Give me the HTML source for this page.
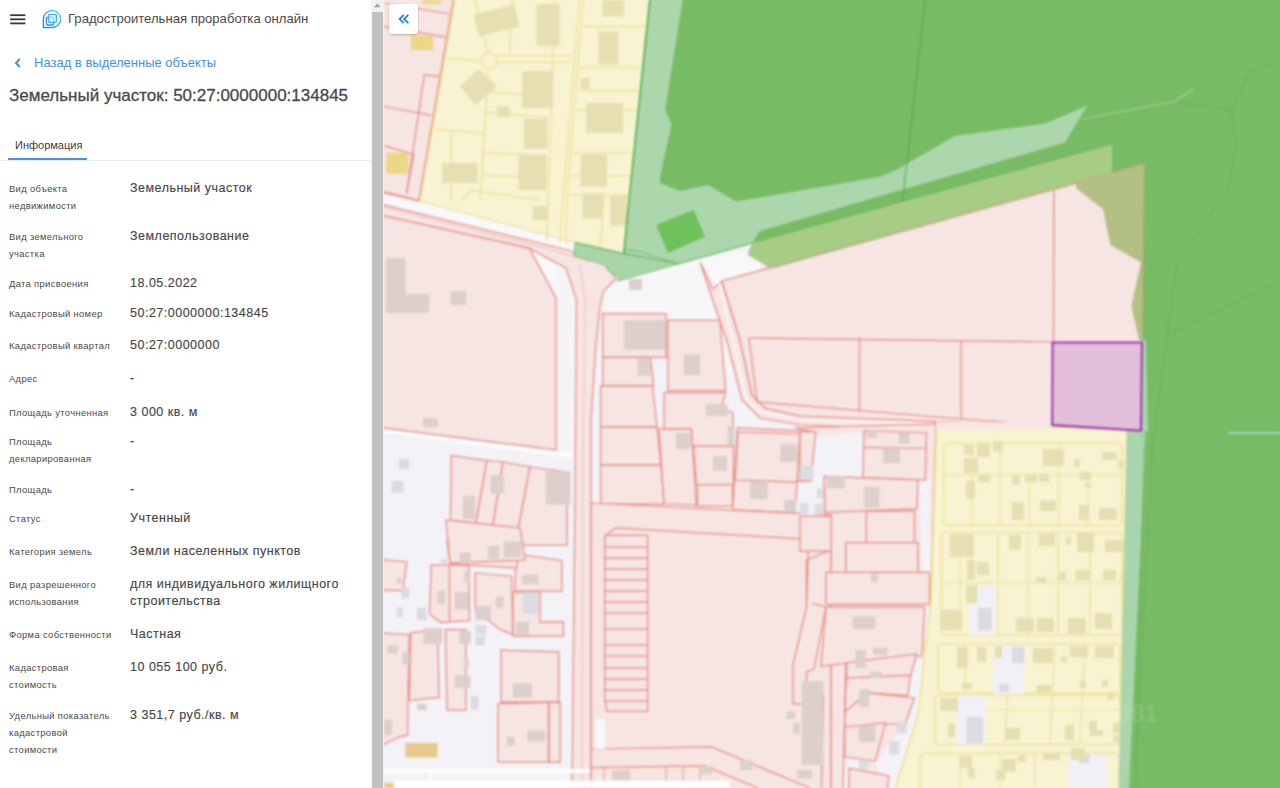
<!DOCTYPE html>
<html><head><meta charset="utf-8">
<style>
*{margin:0;padding:0;box-sizing:border-box}
html,body{width:1280px;height:788px;overflow:hidden;background:#fff;font-family:"Liberation Sans",sans-serif}
#panel{position:absolute;left:0;top:0;width:371px;height:788px;background:#fff}
.a{position:absolute;white-space:nowrap}
.lb{position:absolute;left:9px;font-size:9.4px;letter-spacing:0.35px;line-height:17.2px;color:#4a4a4a}
.vl{position:absolute;left:130px;font-size:12.5px;letter-spacing:0.5px;line-height:17px;color:#474747;-webkit-text-stroke:0.15px #474747}
#sb{position:absolute;left:371px;top:0;width:13px;height:788px;background:#f1f1f1}
#thumb{position:absolute;left:372px;top:12px;width:11px;height:776px;background:#c1c1c1}
#map{position:absolute;left:384px;top:0;width:896px;height:788px;background:#f4f3f7;overflow:hidden}
</style></head><body>
<div id="panel">
  <svg class="a" style="left:10px;top:14px" width="16" height="11" viewBox="0 0 16 11"><rect x="0.2" y="0.3" width="15.2" height="1.8" fill="#383838"/><rect x="0.2" y="4.4" width="15.2" height="1.8" fill="#383838"/><rect x="0.2" y="8.5" width="15.2" height="1.8" fill="#383838"/></svg>
  <svg class="a" style="left:42px;top:9px" width="20" height="20" viewBox="0 0 20 20">
    <defs><linearGradient id="lg" x1="0" y1="1" x2="1" y2="0"><stop offset="0" stop-color="#3d7fdc"/><stop offset="0.6" stop-color="#45b8ec"/><stop offset="1" stop-color="#5fe3d2"/></linearGradient></defs>
    <path d="M1.4 18.6 L1.4 10 A8.6 8.6 0 1 1 10 18.6 Z" fill="none" stroke="url(#lg)" stroke-width="1.5" stroke-linejoin="round"/>
    <rect x="4.4" y="8.2" width="7.4" height="7.8" rx="1.2" fill="#d9f4ff" stroke="#3f8fe0" stroke-width="1.3"/>
    <rect x="6.6" y="5.4" width="7.8" height="8" rx="1.2" fill="#c8f0ff" fill-opacity="0.7" stroke="#44b0ea" stroke-width="1.3"/>
  </svg>
  <div class="a" style="left:68px;top:10px;font-size:13.1px;line-height:18px;color:#4a4a4a">Градостроительная проработка онлайн</div>
  <svg class="a" style="left:14px;top:58px" width="8" height="10" viewBox="0 0 8 10"><path d="M5.8 1 L2 5 L5.8 9" fill="none" stroke="#4a90e0" stroke-width="2"/></svg>
  <div class="a" style="left:34px;top:55px;font-size:13px;line-height:16px;color:#4a8fdc">Назад в выделенные объекты</div>
  <div class="a" style="left:9px;top:85px;font-size:17px;line-height:22px;color:#4a4a4a;-webkit-text-stroke:0.3px #4a4a4a">Земельный участок: 50:27:0000000:134845</div>
  <div class="a" style="left:15px;top:137px;font-size:11px;line-height:16px;color:#3c3c3c">Информация</div>
  <div class="a" style="left:8px;top:158px;width:79px;height:2px;background:#4a90e2"></div>
  <div class="a" style="left:0;top:160px;width:371px;height:1px;background:#ececec"></div>

  <div class="lb" style="top:180px">Вид объекта<br>недвижимости</div>
  <div class="vl" style="top:180px">Земельный участок</div>
  <div class="lb" style="top:228px">Вид земельного<br>участка</div>
  <div class="vl" style="top:228px">Землепользование</div>
  <div class="lb" style="top:275px">Дата присвоения</div>
  <div class="vl" style="top:275px">18.05.2022</div>
  <div class="lb" style="top:305px">Кадастровый номер</div>
  <div class="vl" style="top:305px">50:27:0000000:134845</div>
  <div class="lb" style="top:337px">Кадастровый квартал</div>
  <div class="vl" style="top:337px">50:27:0000000</div>
  <div class="lb" style="top:370px">Адрес</div>
  <div class="vl" style="top:370px">-</div>
  <div class="lb" style="top:404px">Площадь уточненная</div>
  <div class="vl" style="top:404px">3 000 кв. м</div>
  <div class="lb" style="top:433px">Площадь<br>декларированная</div>
  <div class="vl" style="top:433px">-</div>
  <div class="lb" style="top:481px">Площадь</div>
  <div class="vl" style="top:481px">-</div>
  <div class="lb" style="top:510px">Статус</div>
  <div class="vl" style="top:510px">Учтенный</div>
  <div class="lb" style="top:543px">Категория земель</div>
  <div class="vl" style="top:543px">Земли населенных пунктов</div>
  <div class="lb" style="top:576px">Вид разрешенного<br>использования</div>
  <div class="vl" style="top:576px">для индивидуального жилищного<br>строительства</div>
  <div class="lb" style="top:626px">Форма собственности</div>
  <div class="vl" style="top:626px">Частная</div>
  <div class="lb" style="top:659px">Кадастровая<br>стоимость</div>
  <div class="vl" style="top:659px">10 055 100 руб.</div>
  <div class="lb" style="top:707px">Удельный показатель<br>кадастровой<br>стоимости</div>
  <div class="vl" style="top:707px">3 351,7 руб./кв. м</div>
</div>
<div id="sb"></div>
<div id="thumb"></div>
<svg class="a" style="left:371px;top:0" width="13" height="10" viewBox="0 0 13 10"><path d="M3 7.2 L9.5 7.2 L6.25 3.6 Z" fill="#a3a3a3"/></svg>
<div id="map">
<svg width="904" height="796" viewBox="380 -4 904 796" style="position:absolute;left:-4px;top:-4px;filter:blur(0.8px)"><defs><filter id="sh" x="-30%" y="-30%" width="160%" height="160%"><feDropShadow dx="0" dy="1" stdDeviation="1.2" flood-color="#000" flood-opacity="0.25"/></filter></defs>
<rect x="376.0" y="-8.0" width="912.0" height="804.0" fill="#f3f2f7" stroke="none" stroke-width="1" />
<polygon points="376.0,186.0 574.0,240.0 600.0,250.0 640.0,255.0 700.0,258.0 760.0,250.0 760.0,300.0 700.0,300.0 574.0,300.0 376.0,220.0" fill="#f8f8fa" stroke="none" stroke-width="1" />
<rect x="555.0" y="250.0" width="20.0" height="210.0" fill="#f5f5f7" stroke="none" stroke-width="1" />
<polygon points="605.0,285.0 710.0,265.0 722.0,281.0 745.0,390.0 760.0,410.0 840.0,420.0 830.0,425.0 604.0,315.0" fill="#f6f6f8" stroke="none" stroke-width="1" />
<polygon points="376.0,-8.0 454.0,-8.0 419.0,201.0 376.0,191.0" fill="#f6e5e3" stroke="#e8887e" stroke-width="1.25" />
<polyline points="385.0,3.5 451.0,14.0" fill="none" stroke="#e8887e" stroke-width="1.25" />
<polyline points="384.0,26.6 447.5,37.3" fill="none" stroke="#e8887e" stroke-width="1.25" />
<polyline points="424.4,74.6 438.6,76.3" fill="none" stroke="#e8887e" stroke-width="1.25" />
<polyline points="424.4,74.6 406.6,193.5" fill="none" stroke="#e8887e" stroke-width="1.25" />
<polyline points="384.0,106.5 431.5,115.4" fill="none" stroke="#e8887e" stroke-width="1.25" />
<polyline points="384.0,145.6 413.7,154.5 406.6,193.5" fill="none" stroke="#e8887e" stroke-width="1.25" />
<polyline points="384.0,191.8 419.0,200.6" fill="none" stroke="#e8887e" stroke-width="1.25" />
<rect x="411.0" y="35.5" width="22.0" height="14.5" fill="#ebd786" stroke="none" stroke-width="1" />
<rect x="386.4" y="152.7" width="22.0" height="21.3" fill="#ebd786" stroke="none" stroke-width="1" />
<rect x="422.0" y="0.0" width="19.0" height="4.0" fill="#ebd786" stroke="none" stroke-width="1" />
<polygon points="376.0,203.0 568.0,250.0 606.0,264.0 616.0,278.6 603.5,291.0 600.0,306.0 595.5,351.0 591.0,420.0 591.0,796.0 572.0,796.0 575.0,500.0 576.5,300.0 566.0,268.0 529.5,248.4 376.0,214.0" fill="#f6e5e3" stroke="#e8887e" stroke-width="1.25" />
<polyline points="384.0,207.0 560.0,252.0 590.0,262.0" fill="none" stroke="#e8887e" stroke-width="0.8" opacity="0.6"/>
<polyline points="580.0,265.0 585.0,300.0 583.0,450.0 582.0,788.0" fill="none" stroke="#e8887e" stroke-width="0.8" opacity="0.5"/>
<polygon points="376.0,214.0 529.5,248.4 556.0,297.6 556.0,450.0 376.0,427.0" fill="#f6e5e3" stroke="#e8887e" stroke-width="1.25" />
<rect x="386.0" y="258.0" width="19.5" height="55.0" fill="#dccfcc" stroke="none" stroke-width="1" />
<rect x="386.0" y="294.0" width="43.0" height="19.0" fill="#dccfcc" stroke="none" stroke-width="1" />
<rect x="450.4" y="291.3" width="15.6" height="13.7" fill="#dccfcc" stroke="none" stroke-width="1" />
<rect x="423.0" y="418.0" width="13.0" height="9.0" fill="#dccfcc" stroke="none" stroke-width="1" />
<polyline points="384.0,431.0 572.0,456.0" fill="none" stroke="#ffffff" stroke-width="3" />
<polygon points="376.0,559.0 406.7,562.0 403.0,590.4 376.0,590.4" fill="#f6e5e3" stroke="#e8887e" stroke-width="1.25" />
<polygon points="431.2,565.2 469.0,565.2 469.6,620.3 440.7,622.5 429.6,614.0" fill="#f6e5e3" stroke="#e8887e" stroke-width="1.25" />
<polygon points="475.3,573.0 511.5,576.2 513.0,634.5 500.5,629.7 475.3,610.8" fill="#f6e5e3" stroke="#e8887e" stroke-width="1.25" />
<polygon points="516.2,554.2 561.9,560.5 561.9,591.0 514.7,591.0" fill="#f6e5e3" stroke="#e8887e" stroke-width="1.25" />
<polygon points="513.0,592.0 540.0,592.0 540.0,622.0 563.5,621.9 563.5,636.0 513.0,636.0" fill="#f6e5e3" stroke="#e8887e" stroke-width="1.25" />
<polygon points="447.0,540.0 522.5,540.0 516.2,568.0 450.0,563.6" fill="#f6e5e3" stroke="#e8887e" stroke-width="1.25" />
<polygon points="376.0,632.9 409.2,634.5 407.6,735.2 399.7,736.8 376.0,747.8" fill="#f6e5e3" stroke="#e8887e" stroke-width="1.25" />
<polygon points="410.8,632.9 437.5,629.7 439.1,697.4 409.2,700.6" fill="#f6e5e3" stroke="#e8887e" stroke-width="1.25" />
<polygon points="445.4,629.7 465.9,629.7 465.9,710.0 447.0,710.0" fill="#f6e5e3" stroke="#e8887e" stroke-width="1.25" />
<polygon points="501.0,650.2 558.7,651.8 558.7,702.2 501.0,702.2" fill="#f6e5e3" stroke="#e8887e" stroke-width="1.25" />
<polygon points="498.0,703.7 560.3,702.2 560.3,762.0 498.0,762.0" fill="#f6e5e3" stroke="#e8887e" stroke-width="1.25" />
<polygon points="548.5,702.5 548.5,762.0 549.0,762.0 549.0,702.5" fill="#f6e5e3" stroke="#e8887e" stroke-width="1.25" />
<polygon points="451.4,455.7 487.0,460.5 475.8,523.0 450.4,520.0" fill="#f6e5e3" stroke="#e8887e" stroke-width="1.25" />
<polygon points="487.0,460.5 503.0,462.0 493.0,525.0 475.8,523.0" fill="#f6e5e3" stroke="#e8887e" stroke-width="1.25" />
<polygon points="503.0,462.0 530.0,467.0 518.0,530.0 493.0,525.0" fill="#f6e5e3" stroke="#e8887e" stroke-width="1.25" />
<polygon points="530.0,467.0 567.0,472.0 567.0,545.0 520.0,545.0 518.0,530.0" fill="#f6e5e3" stroke="#e8887e" stroke-width="1.25" />
<polygon points="446.0,520.0 520.0,528.0 525.0,560.0 450.0,563.0" fill="#f6e5e3" stroke="#e8887e" stroke-width="1.25" />
<polyline points="449.5,565.0 449.5,621.0" fill="none" stroke="#e8887e" stroke-width="1.25" />
<rect x="488.0" y="546.0" width="11.0" height="13.0" fill="#dccfcc" stroke="none" stroke-width="1" />
<rect x="503.6" y="541.6" width="17.4" height="15.7" fill="#dccfcc" stroke="none" stroke-width="1" />
<rect x="459.6" y="552.6" width="11.0" height="11.0" fill="#dccfcc" stroke="none" stroke-width="1" />
<rect x="437.5" y="590.4" width="7.9" height="14.1" fill="#dccfcc" stroke="none" stroke-width="1" />
<rect x="454.8" y="592.0" width="14.2" height="17.3" fill="#dccfcc" stroke="none" stroke-width="1" />
<rect x="464.3" y="571.5" width="6.3" height="11.0" fill="#dccfcc" stroke="none" stroke-width="1" />
<rect x="495.8" y="596.7" width="7.8" height="11.0" fill="#dccfcc" stroke="none" stroke-width="1" />
<rect x="396.6" y="577.8" width="4.7" height="6.2" fill="#dccfcc" stroke="none" stroke-width="1" />
<rect x="475.3" y="606.0" width="15.7" height="14.3" fill="#dccfcc" stroke="none" stroke-width="1" />
<rect x="522.5" y="574.6" width="15.8" height="9.4" fill="#dccfcc" stroke="none" stroke-width="1" />
<rect x="516.0" y="621.9" width="12.8" height="12.6" fill="#dccfcc" stroke="none" stroke-width="1" />
<rect x="423.4" y="628.0" width="18.8" height="16.0" fill="#dccfcc" stroke="none" stroke-width="1" />
<rect x="387.0" y="645.5" width="11.2" height="7.9" fill="#dccfcc" stroke="none" stroke-width="1" />
<rect x="402.9" y="651.8" width="6.3" height="12.6" fill="#dccfcc" stroke="none" stroke-width="1" />
<rect x="459.6" y="631.3" width="11.0" height="12.7" fill="#dccfcc" stroke="none" stroke-width="1" />
<rect x="454.8" y="675.4" width="15.8" height="12.6" fill="#dccfcc" stroke="none" stroke-width="1" />
<rect x="464.3" y="659.6" width="4.7" height="7.9" fill="#dccfcc" stroke="none" stroke-width="1" />
<rect x="417.0" y="703.7" width="9.5" height="6.3" fill="#dccfcc" stroke="none" stroke-width="1" />
<rect x="513.0" y="683.3" width="19.0" height="14.1" fill="#dccfcc" stroke="none" stroke-width="1" />
<rect x="527.3" y="730.5" width="17.3" height="11.0" fill="#dccfcc" stroke="none" stroke-width="1" />
<rect x="506.8" y="736.8" width="7.9" height="9.4" fill="#dccfcc" stroke="none" stroke-width="1" />
<rect x="384.0" y="719.5" width="7.9" height="15.7" fill="#dccfcc" stroke="none" stroke-width="1" />
<rect x="423.0" y="418.6" width="14.7" height="8.7" fill="#dccfcc" stroke="none" stroke-width="1" />
<rect x="463.0" y="495.7" width="11.8" height="23.3" fill="#dccfcc" stroke="none" stroke-width="1" />
<rect x="490.4" y="475.2" width="13.6" height="18.6" fill="#dccfcc" stroke="none" stroke-width="1" />
<rect x="546.0" y="471.3" width="24.5" height="33.2" fill="#dccfcc" stroke="none" stroke-width="1" />
<rect x="440.7" y="559.0" width="6.3" height="6.0" fill="#dcdbe2" stroke="none" stroke-width="1" />
<rect x="401.3" y="587.2" width="7.9" height="11.0" fill="#dcdbe2" stroke="none" stroke-width="1" />
<rect x="396.6" y="607.7" width="6.3" height="9.3" fill="#dcdbe2" stroke="none" stroke-width="1" />
<rect x="417.0" y="607.7" width="9.5" height="12.6" fill="#dcdbe2" stroke="none" stroke-width="1" />
<rect x="475.3" y="625.0" width="11.0" height="9.5" fill="#dcdbe2" stroke="none" stroke-width="1" />
<rect x="475.3" y="636.0" width="9.5" height="9.5" fill="#dcdbe2" stroke="none" stroke-width="1" />
<rect x="522.5" y="592.0" width="15.8" height="22.0" fill="#dcdbe2" stroke="none" stroke-width="1" />
<rect x="470.6" y="695.9" width="7.9" height="14.1" fill="#dcdbe2" stroke="none" stroke-width="1" />
<rect x="398.6" y="458.6" width="10.8" height="10.7" fill="#dcdbe2" stroke="none" stroke-width="1" />
<rect x="391.8" y="481.0" width="11.7" height="11.8" fill="#dcdbe2" stroke="none" stroke-width="1" />
<rect x="405.4" y="743.0" width="32.1" height="14.3" fill="#e9c88c" stroke="none" stroke-width="1" />
<polyline points="384.0,771.0 590.0,771.0" fill="none" stroke="#ffffff" stroke-width="4" />
<polyline points="430.0,771.0 430.0,780.0" fill="none" stroke="#ffffff" stroke-width="2" />
<polygon points="713.0,289.0 722.0,281.0 740.0,340.0 752.0,395.0 765.0,408.0 800.0,416.0 935.0,420.0 935.0,430.0 800.0,425.0 760.0,418.0 742.0,400.0 728.0,345.0 700.0,262.0" fill="#f6e5e3" stroke="#e8887e" stroke-width="1.25" />
<polyline points="705.0,262.0 720.0,285.0 734.0,345.0 746.0,398.0 760.0,412.0 800.0,420.0 935.0,424.0" fill="none" stroke="#ffffff" stroke-width="1.5" opacity="0.8"/>
<polygon points="602.7,313.5 666.2,313.5 666.0,357.4 602.7,357.4" fill="#f6e5e3" stroke="#e8887e" stroke-width="1.25" />
<polygon points="668.0,320.3 720.0,320.3 725.7,390.6 668.0,390.6" fill="#f6e5e3" stroke="#e8887e" stroke-width="1.25" />
<polygon points="602.7,357.4 650.5,357.4 653.5,385.7 602.7,385.7" fill="#f6e5e3" stroke="#e8887e" stroke-width="1.25" />
<polygon points="600.7,385.9 652.5,385.9 657.0,427.0 600.7,427.0" fill="#f6e5e3" stroke="#e8887e" stroke-width="1.25" />
<polygon points="600.7,427.0 657.0,427.0 661.0,465.0 600.7,465.0" fill="#f6e5e3" stroke="#e8887e" stroke-width="1.25" />
<polygon points="600.7,465.0 661.0,465.0 664.0,504.0 600.7,504.0" fill="#f6e5e3" stroke="#e8887e" stroke-width="1.25" />
<polygon points="659.0,428.8 691.6,428.8 696.4,505.0 664.0,504.0" fill="#f6e5e3" stroke="#e8887e" stroke-width="1.25" />
<polygon points="664.2,392.7 725.7,392.7 720.9,410.3 732.6,412.2 733.5,446.4 692.5,446.4 691.6,428.8 664.0,428.8" fill="#f6e5e3" stroke="#e8887e" stroke-width="1.25" />
<polygon points="693.5,446.0 733.5,446.0 733.5,484.5 696.4,484.5" fill="#f6e5e3" stroke="#e8887e" stroke-width="1.25" />
<polygon points="697.4,484.5 732.6,484.5 732.6,506.0 697.4,506.0" fill="#f6e5e3" stroke="#e8887e" stroke-width="1.25" />
<polygon points="737.5,427.8 815.6,431.8 810.7,481.6 797.0,481.0 795.0,512.8 732.6,509.9" fill="#f6e5e3" stroke="#e8887e" stroke-width="1.25" />
<polygon points="738.0,432.0 800.0,434.0 797.0,482.0 735.0,480.0" fill="#f6e5e3" stroke="#e8887e" stroke-width="1.25" />
<rect x="624.0" y="320.0" width="41.0" height="29.6" fill="#dccfcc" stroke="none" stroke-width="1" />
<rect x="683.8" y="354.5" width="16.2" height="20.5" fill="#dccfcc" stroke="none" stroke-width="1" />
<rect x="637.8" y="358.4" width="12.7" height="17.6" fill="#dccfcc" stroke="none" stroke-width="1" />
<rect x="706.0" y="404.4" width="21.7" height="11.6" fill="#dccfcc" stroke="none" stroke-width="1" />
<rect x="676.0" y="432.7" width="14.6" height="16.6" fill="#dccfcc" stroke="none" stroke-width="1" />
<rect x="713.0" y="456.2" width="13.7" height="14.6" fill="#dccfcc" stroke="none" stroke-width="1" />
<rect x="780.4" y="444.5" width="16.6" height="17.5" fill="#dccfcc" stroke="none" stroke-width="1" />
<rect x="750.0" y="481.6" width="17.7" height="17.4" fill="#dccfcc" stroke="none" stroke-width="1" />
<rect x="784.3" y="500.0" width="11.7" height="12.8" fill="#dccfcc" stroke="none" stroke-width="1" />
<rect x="727.7" y="425.9" width="6.8" height="19.5" fill="#dccfcc" stroke="none" stroke-width="1" />
<rect x="629.0" y="279.0" width="12.8" height="11.0" fill="#dccfcc" stroke="none" stroke-width="1" />
<polygon points="591.0,503.0 831.0,515.0 831.0,796.0 591.0,796.0" fill="#f6e5e3" stroke="#e8887e" stroke-width="1.25" />
<polyline points="606.0,535.4 615.4,527.8 804.6,539.2 808.4,548.6 806.5,607.3 793.2,664.0 793.2,703.8 823.4,703.8 823.4,695.4 806.5,695.4 806.5,672.0 814.0,669.0 826.0,607.0 812.0,603.5" fill="none" stroke="#e8887e" stroke-width="1.25" />
<polyline points="591.0,749.0 711.6,747.0 810.0,788.0" fill="none" stroke="#e8887e" stroke-width="1.25" />
<polyline points="591.0,767.7 705.0,765.8 757.7,788.0" fill="none" stroke="#e8887e" stroke-width="1.25" />
<polyline points="831.0,550.0 806.5,560.0 806.5,607.3" fill="none" stroke="#e8887e" stroke-width="1.25" />
<polygon points="604.8,535.4 647.6,535.4 647.6,711.3 607.0,711.3 604.8,700.0" fill="#f6e5e3" stroke="#e8887e" stroke-width="1.25" />
<polyline points="605.0,547.0 648.0,547.0" fill="none" stroke="#e8887e" stroke-width="1.25" />
<polyline points="605.0,558.0 648.0,558.0" fill="none" stroke="#e8887e" stroke-width="1.25" />
<polyline points="605.0,569.0 648.0,569.0" fill="none" stroke="#e8887e" stroke-width="1.25" />
<polyline points="605.0,580.0 648.0,580.0" fill="none" stroke="#e8887e" stroke-width="1.25" />
<polyline points="605.0,591.0 648.0,591.0" fill="none" stroke="#e8887e" stroke-width="1.25" />
<polyline points="605.0,602.0 648.0,602.0" fill="none" stroke="#e8887e" stroke-width="1.25" />
<polyline points="605.0,613.0 648.0,613.0" fill="none" stroke="#e8887e" stroke-width="1.25" />
<polyline points="605.0,629.0 648.0,629.0" fill="none" stroke="#e8887e" stroke-width="1.25" />
<polyline points="605.0,645.0 648.0,645.0" fill="none" stroke="#e8887e" stroke-width="1.25" />
<polyline points="605.0,656.0 648.0,656.0" fill="none" stroke="#e8887e" stroke-width="1.25" />
<polyline points="605.0,668.0 648.0,668.0" fill="none" stroke="#e8887e" stroke-width="1.25" />
<polyline points="605.0,679.0 648.0,679.0" fill="none" stroke="#e8887e" stroke-width="1.25" />
<polyline points="605.0,690.0 648.0,690.0" fill="none" stroke="#e8887e" stroke-width="1.25" />
<polyline points="605.0,701.0 648.0,701.0" fill="none" stroke="#e8887e" stroke-width="1.25" />
<rect x="595.0" y="719.0" width="10.0" height="30.0" fill="#f8f8fa" stroke="none" stroke-width="1" />
<polyline points="604.0,767.0 604.0,788.0" fill="none" stroke="#e8887e" stroke-width="0.8" />
<polyline points="666.0,767.0 666.0,788.0" fill="none" stroke="#e8887e" stroke-width="0.8" />
<polyline points="683.0,767.0 683.0,788.0" fill="none" stroke="#e8887e" stroke-width="0.8" />
<polyline points="700.0,767.0 700.0,788.0" fill="none" stroke="#e8887e" stroke-width="0.8" />
<rect x="612.0" y="770.0" width="18.0" height="12.0" fill="#dccfcc" stroke="none" stroke-width="1" />
<rect x="700.0" y="766.0" width="12.0" height="8.0" fill="#dccfcc" stroke="none" stroke-width="1" />
<rect x="740.0" y="760.0" width="12.0" height="10.0" fill="#dccfcc" stroke="none" stroke-width="1" />
<polygon points="795.0,428.0 936.0,424.0 931.0,600.0 918.0,715.0 893.0,796.0 831.0,796.0 831.0,515.0 810.0,512.0 815.0,432.0" fill="#f6e5e3" stroke="#e8887e" stroke-width="1.25" />
<polygon points="815.0,436.0 864.0,432.0 862.0,476.0 824.0,476.0 818.0,520.0 800.0,520.0 806.0,481.0" fill="#f3f2f7" stroke="none" stroke-width="1" />
<polygon points="918.0,480.0 930.0,480.0 930.0,665.0 911.0,675.0 916.0,654.0 926.0,651.0" fill="#f3f2f7" stroke="none" stroke-width="1" />
<polygon points="910.0,675.0 931.0,655.0 918.0,715.0 893.0,796.0 887.0,796.0 875.0,762.0 905.0,723.0" fill="#f3f2f7" stroke="none" stroke-width="1" />
<polygon points="843.0,757.0 860.0,757.0 860.0,796.0 843.0,796.0" fill="#f3f2f7" stroke="none" stroke-width="1" />
<polygon points="863.9,430.5 926.5,433.0 925.3,480.0 863.0,477.5" fill="#f6e5e3" stroke="#e8887e" stroke-width="1.25" />
<polygon points="824.0,476.3 918.0,480.0 916.9,508.8 825.3,512.4" fill="#f6e5e3" stroke="#e8887e" stroke-width="1.25" />
<polygon points="866.3,511.2 914.5,511.2 914.5,542.5 866.3,542.5" fill="#f6e5e3" stroke="#e8887e" stroke-width="1.25" />
<polygon points="845.8,542.5 918.0,542.5 918.0,572.7 845.8,572.7" fill="#f6e5e3" stroke="#e8887e" stroke-width="1.25" />
<polygon points="826.0,572.4 929.6,572.4 929.6,604.4 826.0,604.4" fill="#f6e5e3" stroke="#e8887e" stroke-width="1.25" />
<polygon points="800.0,516.0 831.3,516.0 831.3,551.0 800.0,551.0" fill="#f6e5e3" stroke="#e8887e" stroke-width="1.25" />
<polygon points="800.0,431.7 815.7,431.7 810.8,481.0 800.0,481.0" fill="#f6e5e3" stroke="#e8887e" stroke-width="1.25" />
<polygon points="826.0,607.0 924.7,607.0 922.0,656.0 821.0,666.0" fill="#f6e5e3" stroke="#e8887e" stroke-width="1.25" />
<polygon points="846.5,662.9 916.8,654.0 910.6,675.4 846.5,678.0" fill="#f6e5e3" stroke="#e8887e" stroke-width="1.25" />
<polygon points="846.5,678.0 910.6,675.4 908.0,695.5 867.8,693.0 867.8,711.9 844.7,711.9" fill="#f6e5e3" stroke="#e8887e" stroke-width="1.25" />
<polygon points="867.8,693.0 914.3,698.0 905.5,723.0 844.7,727.0 844.7,711.9" fill="#f6e5e3" stroke="#e8887e" stroke-width="1.25" />
<polygon points="844.7,727.0 885.4,723.0 875.4,760.9 844.7,757.0" fill="#f6e5e3" stroke="#e8887e" stroke-width="1.25" />
<polygon points="849.0,768.4 889.2,776.0 886.0,796.0 849.0,796.0" fill="#f6e5e3" stroke="#e8887e" stroke-width="1.25" />
<polyline points="823.4,703.8 821.5,788.0" fill="none" stroke="#e8887e" stroke-width="1.25" />
<polyline points="864.0,447.3 926.0,448.5" fill="none" stroke="#e8887e" stroke-width="1.25" />
<polyline points="846.0,662.5 843.0,788.0" fill="none" stroke="#e8887e" stroke-width="1.25" />
<rect x="866.3" y="430.5" width="10.7" height="7.2" fill="#dccfcc" stroke="none" stroke-width="1" />
<rect x="898.8" y="433.0" width="10.8" height="10.7" fill="#dccfcc" stroke="none" stroke-width="1" />
<rect x="883.0" y="448.5" width="17.0" height="14.5" fill="#dccfcc" stroke="none" stroke-width="1" />
<rect x="826.5" y="476.3" width="18.1" height="12.0" fill="#dccfcc" stroke="none" stroke-width="1" />
<rect x="863.9" y="487.0" width="15.6" height="20.6" fill="#dccfcc" stroke="none" stroke-width="1" />
<rect x="871.0" y="573.9" width="7.3" height="8.4" fill="#dccfcc" stroke="none" stroke-width="1" />
<rect x="852.8" y="616.4" width="22.6" height="12.6" fill="#dccfcc" stroke="none" stroke-width="1" />
<rect x="855.8" y="650.3" width="10.0" height="17.7" fill="#dccfcc" stroke="none" stroke-width="1" />
<rect x="872.9" y="647.8" width="14.5" height="7.0" fill="#dccfcc" stroke="none" stroke-width="1" />
<rect x="870.4" y="671.7" width="11.3" height="6.3" fill="#dccfcc" stroke="none" stroke-width="1" />
<rect x="859.0" y="689.2" width="10.1" height="17.6" fill="#dccfcc" stroke="none" stroke-width="1" />
<rect x="859.0" y="725.7" width="16.4" height="16.3" fill="#dccfcc" stroke="none" stroke-width="1" />
<rect x="801.8" y="681.3" width="21.6" height="83.6" fill="#dccfcc" stroke="none" stroke-width="1" />
<rect x="797.0" y="770.0" width="15.0" height="8.3" fill="#dccfcc" stroke="none" stroke-width="1" />
<rect x="786.4" y="711.3" width="8.6" height="7.7" fill="#dccfcc" stroke="none" stroke-width="1" />
<rect x="793.0" y="722.7" width="6.7" height="11.3" fill="#dccfcc" stroke="none" stroke-width="1" />
<rect x="800.0" y="465.4" width="13.3" height="14.6" fill="#dcdbe2" stroke="none" stroke-width="1" />
<rect x="816.9" y="488.3" width="7.1" height="9.7" fill="#dcdbe2" stroke="none" stroke-width="1" />
<rect x="800.0" y="502.8" width="8.4" height="10.8" fill="#dcdbe2" stroke="none" stroke-width="1" />
<rect x="814.5" y="504.0" width="9.5" height="10.8" fill="#dcdbe2" stroke="none" stroke-width="1" />
<rect x="889.2" y="740.8" width="10.0" height="13.8" fill="#dcdbe2" stroke="none" stroke-width="1" />
<rect x="859.0" y="759.6" width="8.8" height="10.0" fill="#dcdbe2" stroke="none" stroke-width="1" />
<rect x="896.7" y="722.0" width="10.1" height="11.2" fill="#dcdbe2" stroke="none" stroke-width="1" />
<polygon points="722.0,281.0 1144.0,164.0 1141.0,431.0 1052.0,426.0 800.0,416.0 765.0,408.0 752.0,395.0 740.0,340.0" fill="#f6e5e3" stroke="#e8887e" stroke-width="1.25" />
<polyline points="749.0,338.0 1052.6,342.0" fill="none" stroke="#e8887e" stroke-width="1.25" />
<polyline points="757.0,402.0 961.0,419.0 1053.4,425.7" fill="none" stroke="#e8887e" stroke-width="1.25" />
<polyline points="749.0,338.0 757.0,402.0" fill="none" stroke="#e8887e" stroke-width="1.25" />
<polyline points="859.5,338.0 859.5,412.0" fill="none" stroke="#e8887e" stroke-width="1.25" />
<polyline points="961.2,341.0 961.2,419.0" fill="none" stroke="#e8887e" stroke-width="1.25" />
<polyline points="1054.0,189.0 1053.5,342.0" fill="none" stroke="#e8887e" stroke-width="1.25" />
<polygon points="454.0,-8.0 650.0,-8.0 629.0,200.0 623.8,253.8 575.0,242.5 419.0,201.0" fill="#f8f3d1" stroke="#e9de90" stroke-width="1" />
<polygon points="936.7,422.0 1127.0,430.0 1118.7,796.0 893.0,796.0 918.0,715.0 931.0,600.0" fill="#f8f3d1" stroke="#ece28f" stroke-width="1.5" />
<rect x="936.0" y="422.0" width="116.0" height="7.0" fill="#f6e5e3" stroke="none" stroke-width="1" />
<polyline points="454.0,0.0 419.0,201.0" fill="none" stroke="#e8887e" stroke-width="1.2" />
<polyline points="475.4,0.0 488.0,53.3" fill="none" stroke="#ede39c" stroke-width="1.5" />
<polyline points="489.0,55.8 571.8,55.8" fill="none" stroke="#ede39c" stroke-width="1.5" />
<polyline points="489.0,62.2 571.8,62.2" fill="none" stroke="#ede39c" stroke-width="1.5" />
<polyline points="579.4,0.0 563.0,200.0 560.0,243.0" fill="none" stroke="#ede39c" stroke-width="1.5" />
<polyline points="583.0,0.0 566.7,200.0 566.0,244.0" fill="none" stroke="#ede39c" stroke-width="1.5" />
<polyline points="447.5,58.4 480.4,61.0" fill="none" stroke="#ede39c" stroke-width="1.5" />
<polyline points="485.5,91.4 546.4,96.4" fill="none" stroke="#ede39c" stroke-width="1.5" />
<polyline points="436.0,129.4 483.0,133.2" fill="none" stroke="#ede39c" stroke-width="1.5" />
<polyline points="483.0,111.7 549.0,118.0" fill="none" stroke="#ede39c" stroke-width="1.5" />
<polyline points="480.4,152.3 546.4,156.0" fill="none" stroke="#ede39c" stroke-width="1.5" />
<polyline points="480.4,175.0 544.0,177.7" fill="none" stroke="#ede39c" stroke-width="1.5" />
<polyline points="488.0,71.0 480.4,200.0" fill="none" stroke="#ede39c" stroke-width="1.5" />
<polyline points="451.3,132.0 451.3,200.0" fill="none" stroke="#ede39c" stroke-width="1.5" />
<polyline points="512.2,0.0 509.6,53.3" fill="none" stroke="#ede39c" stroke-width="1.5" />
<polyline points="583.0,26.6 645.0,26.6" fill="none" stroke="#ede39c" stroke-width="1.5" />
<polyline points="580.0,67.5 640.0,67.5" fill="none" stroke="#ede39c" stroke-width="1.5" />
<polyline points="578.0,90.5 638.0,90.5" fill="none" stroke="#ede39c" stroke-width="1.5" />
<polyline points="576.0,110.0 637.0,110.0" fill="none" stroke="#ede39c" stroke-width="1.5" />
<polyline points="572.0,152.7 633.0,152.7" fill="none" stroke="#ede39c" stroke-width="1.5" />
<polyline points="570.0,175.8 631.0,175.8" fill="none" stroke="#ede39c" stroke-width="1.5" />
<polyline points="568.0,195.3 630.0,195.3" fill="none" stroke="#ede39c" stroke-width="1.5" />
<polyline points="555.0,0.0 547.0,240.0" fill="none" stroke="#ede39c" stroke-width="1.5" />
<polyline points="463.0,200.0 470.0,190.0 540.0,200.0" fill="none" stroke="#ede39c" stroke-width="1.5" />
<polyline points="604.0,195.0 600.0,250.0" fill="none" stroke="#ede39c" stroke-width="1.5" />
<circle cx="489.3" cy="61" r="8" fill="#f8f3d1" stroke="#ede39c" stroke-width="1.5"/>
<polygon points="473.8,14.9 514.3,5.0 519.2,26.4 478.8,36.3" fill="#e5dfb2" stroke="none" stroke-width="1" />
<polygon points="460.0,86.6 478.8,69.3 497.0,86.6 475.5,104.8" fill="#e5dfb2" stroke="none" stroke-width="1" />
<rect x="536.5" y="4.0" width="23.1" height="42.0" fill="#e5dfb2" stroke="none" stroke-width="1" />
<rect x="602.5" y="0.0" width="21.5" height="16.5" fill="#e5dfb2" stroke="none" stroke-width="1" />
<rect x="598.4" y="31.4" width="19.8" height="33.0" fill="#e5dfb2" stroke="none" stroke-width="1" />
<rect x="522.0" y="71.0" width="31.0" height="37.0" fill="#e5dfb2" stroke="none" stroke-width="1" />
<rect x="497.0" y="106.5" width="12.6" height="10.5" fill="#e5dfb2" stroke="none" stroke-width="1" />
<rect x="523.8" y="119.0" width="23.8" height="30.0" fill="#e5dfb2" stroke="none" stroke-width="1" />
<rect x="586.0" y="103.0" width="37.0" height="30.0" fill="#e5dfb2" stroke="none" stroke-width="1" />
<rect x="580.6" y="78.0" width="8.9" height="10.8" fill="#e5dfb2" stroke="none" stroke-width="1" />
<rect x="442.0" y="163.0" width="35.6" height="20.0" fill="#e5dfb2" stroke="none" stroke-width="1" />
<rect x="518.5" y="154.5" width="28.5" height="35.5" fill="#e5dfb2" stroke="none" stroke-width="1" />
<rect x="580.6" y="154.5" width="26.4" height="31.9" fill="#e5dfb2" stroke="none" stroke-width="1" />
<rect x="532.7" y="206.0" width="14.3" height="14.0" fill="#e5dfb2" stroke="none" stroke-width="1" />
<rect x="582.4" y="193.5" width="20.6" height="24.9" fill="#e5dfb2" stroke="none" stroke-width="1" />
<rect x="610.0" y="195.0" width="16.8" height="30.5" fill="#e5dfb2" stroke="none" stroke-width="1" />
<rect x="943.8" y="443.2" width="178.20000000000005" height="82.09999999999997" rx="4" fill="none" stroke="#ede39c" stroke-width="1.5"/>
<rect x="941.4" y="532.4" width="180.60000000000002" height="102.80000000000007" rx="4" fill="none" stroke="#ede39c" stroke-width="1.5"/>
<rect x="938" y="644" width="182" height="49" rx="4" fill="none" stroke="#ede39c" stroke-width="1.5"/>
<rect x="935" y="695" width="185" height="49.5" rx="4" fill="none" stroke="#ede39c" stroke-width="1.5"/>
<rect x="920" y="753.3" width="199" height="46.700000000000045" rx="4" fill="none" stroke="#ede39c" stroke-width="1.5"/>
<polyline points="943.8,474.9 1122.0,474.9" fill="none" stroke="#ede39c" stroke-width="1.2" />
<polyline points="1000.0,443.0 1000.0,525.0" fill="none" stroke="#ede39c" stroke-width="1.2" />
<polyline points="1058.8,443.0 1058.8,525.0" fill="none" stroke="#ede39c" stroke-width="1.2" />
<polyline points="972.0,475.0 972.0,525.0" fill="none" stroke="#ede39c" stroke-width="1.2" />
<polyline points="1029.5,475.0 1029.5,525.0" fill="none" stroke="#ede39c" stroke-width="1.2" />
<polyline points="1088.0,475.0 1088.0,525.0" fill="none" stroke="#ede39c" stroke-width="1.2" />
<polyline points="941.0,582.8 1122.0,582.8" fill="none" stroke="#ede39c" stroke-width="1.2" />
<polyline points="998.0,532.0 998.0,635.0" fill="none" stroke="#ede39c" stroke-width="1.2" />
<polyline points="1028.0,532.0 1028.0,635.0" fill="none" stroke="#ede39c" stroke-width="1.2" />
<polyline points="1058.0,532.0 1058.0,635.0" fill="none" stroke="#ede39c" stroke-width="1.2" />
<polyline points="1090.0,532.0 1090.0,635.0" fill="none" stroke="#ede39c" stroke-width="1.2" />
<polyline points="960.0,532.0 960.0,635.0" fill="none" stroke="#ede39c" stroke-width="1.2" />
<polyline points="965.0,644.0 965.0,693.0" fill="none" stroke="#ede39c" stroke-width="1.2" />
<polyline points="1010.0,644.0 1005.0,744.0" fill="none" stroke="#ede39c" stroke-width="1.2" />
<polyline points="1055.0,644.0 1050.0,744.0" fill="none" stroke="#ede39c" stroke-width="1.2" />
<polyline points="1085.0,644.0 1080.0,744.0" fill="none" stroke="#ede39c" stroke-width="1.2" />
<polyline points="950.0,710.0 1120.0,710.0" fill="none" stroke="#ede39c" stroke-width="1.2" />
<polyline points="960.0,753.0 960.0,788.0" fill="none" stroke="#ede39c" stroke-width="1.2" />
<polyline points="1000.0,753.0 1000.0,788.0" fill="none" stroke="#ede39c" stroke-width="1.2" />
<polyline points="1035.0,753.0 1035.0,788.0" fill="none" stroke="#ede39c" stroke-width="1.2" />
<rect x="969.2" y="586.0" width="26.4" height="49.2" fill="#f1f0f7" stroke="none" stroke-width="1" />
<rect x="993.0" y="645.3" width="31.5" height="49.0" fill="#f1f0f7" stroke="none" stroke-width="1" />
<rect x="956.6" y="695.5" width="28.9" height="49.0" fill="#f1f0f7" stroke="none" stroke-width="1" />
<rect x="1068.4" y="754.6" width="39.0" height="33.4" fill="#f1f0f7" stroke="none" stroke-width="1" />
<rect x="978.0" y="607.6" width="13.8" height="22.6" fill="#dcdbe2" stroke="none" stroke-width="1" />
<rect x="1012.0" y="646.5" width="12.5" height="16.4" fill="#dcdbe2" stroke="none" stroke-width="1" />
<rect x="999.3" y="684.2" width="10.1" height="7.6" fill="#dcdbe2" stroke="none" stroke-width="1" />
<rect x="966.7" y="716.9" width="16.3" height="26.4" fill="#dcdbe2" stroke="none" stroke-width="1" />
<rect x="1078.5" y="754.6" width="11.3" height="8.8" fill="#dcdbe2" stroke="none" stroke-width="1" />
<rect x="963.7" y="445.0" width="10.3" height="10.0" fill="#e5dfb2" stroke="none" stroke-width="1" />
<rect x="977.0" y="443.0" width="13.0" height="14.0" fill="#e5dfb2" stroke="none" stroke-width="1" />
<rect x="993.0" y="441.0" width="10.0" height="11.0" fill="#e5dfb2" stroke="none" stroke-width="1" />
<rect x="1043.0" y="449.0" width="21.0" height="17.0" fill="#e5dfb2" stroke="none" stroke-width="1" />
<rect x="1074.0" y="459.0" width="6.0" height="8.0" fill="#e5dfb2" stroke="none" stroke-width="1" />
<rect x="1102.0" y="452.0" width="15.0" height="8.0" fill="#e5dfb2" stroke="none" stroke-width="1" />
<rect x="1118.0" y="460.0" width="6.0" height="8.0" fill="#e5dfb2" stroke="none" stroke-width="1" />
<rect x="964.0" y="458.0" width="14.0" height="15.0" fill="#e5dfb2" stroke="none" stroke-width="1" />
<rect x="978.0" y="474.0" width="12.0" height="8.0" fill="#e5dfb2" stroke="none" stroke-width="1" />
<rect x="966.0" y="481.0" width="9.0" height="18.0" fill="#e5dfb2" stroke="none" stroke-width="1" />
<rect x="1012.0" y="475.0" width="8.0" height="10.0" fill="#e5dfb2" stroke="none" stroke-width="1" />
<rect x="1025.0" y="474.0" width="12.0" height="8.0" fill="#e5dfb2" stroke="none" stroke-width="1" />
<rect x="1039.0" y="474.0" width="10.0" height="8.0" fill="#e5dfb2" stroke="none" stroke-width="1" />
<rect x="1080.0" y="472.0" width="11.0" height="8.0" fill="#e5dfb2" stroke="none" stroke-width="1" />
<rect x="1085.0" y="483.0" width="6.0" height="5.0" fill="#e5dfb2" stroke="none" stroke-width="1" />
<rect x="1012.0" y="502.0" width="12.0" height="18.0" fill="#e5dfb2" stroke="none" stroke-width="1" />
<rect x="1040.0" y="500.0" width="16.0" height="11.0" fill="#e5dfb2" stroke="none" stroke-width="1" />
<rect x="1079.0" y="505.0" width="10.0" height="15.0" fill="#e5dfb2" stroke="none" stroke-width="1" />
<rect x="1099.0" y="508.0" width="18.0" height="12.0" fill="#e5dfb2" stroke="none" stroke-width="1" />
<rect x="950.0" y="534.0" width="24.0" height="23.0" fill="#e5dfb2" stroke="none" stroke-width="1" />
<rect x="1009.0" y="535.0" width="12.0" height="15.0" fill="#e5dfb2" stroke="none" stroke-width="1" />
<rect x="1039.0" y="534.0" width="16.0" height="12.0" fill="#e5dfb2" stroke="none" stroke-width="1" />
<rect x="1066.0" y="537.0" width="5.0" height="8.0" fill="#e5dfb2" stroke="none" stroke-width="1" />
<rect x="1077.0" y="533.0" width="17.0" height="19.0" fill="#e5dfb2" stroke="none" stroke-width="1" />
<rect x="1105.0" y="540.0" width="19.0" height="12.0" fill="#e5dfb2" stroke="none" stroke-width="1" />
<rect x="967.0" y="560.0" width="8.0" height="20.0" fill="#e5dfb2" stroke="none" stroke-width="1" />
<rect x="977.0" y="562.0" width="12.0" height="13.0" fill="#e5dfb2" stroke="none" stroke-width="1" />
<rect x="1036.0" y="577.0" width="10.0" height="6.0" fill="#e5dfb2" stroke="none" stroke-width="1" />
<rect x="1058.0" y="572.0" width="8.0" height="8.0" fill="#e5dfb2" stroke="none" stroke-width="1" />
<rect x="1075.0" y="570.0" width="16.0" height="10.0" fill="#e5dfb2" stroke="none" stroke-width="1" />
<rect x="1103.0" y="570.0" width="13.0" height="10.0" fill="#e5dfb2" stroke="none" stroke-width="1" />
<rect x="1120.0" y="575.0" width="5.0" height="5.0" fill="#e5dfb2" stroke="none" stroke-width="1" />
<rect x="966.0" y="585.0" width="11.0" height="18.0" fill="#e5dfb2" stroke="none" stroke-width="1" />
<rect x="940.0" y="610.0" width="22.0" height="20.0" fill="#e5dfb2" stroke="none" stroke-width="1" />
<rect x="1016.0" y="618.0" width="18.0" height="14.0" fill="#e5dfb2" stroke="none" stroke-width="1" />
<rect x="1037.0" y="618.0" width="17.0" height="14.0" fill="#e5dfb2" stroke="none" stroke-width="1" />
<rect x="1068.0" y="618.0" width="18.0" height="16.0" fill="#e5dfb2" stroke="none" stroke-width="1" />
<rect x="1095.0" y="613.0" width="17.0" height="16.0" fill="#e5dfb2" stroke="none" stroke-width="1" />
<rect x="957.0" y="647.0" width="11.0" height="21.0" fill="#e5dfb2" stroke="none" stroke-width="1" />
<rect x="977.0" y="647.0" width="9.0" height="15.0" fill="#e5dfb2" stroke="none" stroke-width="1" />
<rect x="995.0" y="646.0" width="7.0" height="12.0" fill="#e5dfb2" stroke="none" stroke-width="1" />
<rect x="1033.0" y="648.0" width="20.0" height="15.0" fill="#e5dfb2" stroke="none" stroke-width="1" />
<rect x="1070.0" y="646.0" width="18.0" height="11.0" fill="#e5dfb2" stroke="none" stroke-width="1" />
<rect x="1095.0" y="646.0" width="19.0" height="12.0" fill="#e5dfb2" stroke="none" stroke-width="1" />
<rect x="1061.0" y="656.0" width="6.0" height="6.0" fill="#e5dfb2" stroke="none" stroke-width="1" />
<rect x="962.0" y="683.0" width="10.0" height="6.0" fill="#e5dfb2" stroke="none" stroke-width="1" />
<rect x="1037.0" y="685.0" width="14.0" height="7.0" fill="#e5dfb2" stroke="none" stroke-width="1" />
<rect x="1080.0" y="681.0" width="6.0" height="7.0" fill="#e5dfb2" stroke="none" stroke-width="1" />
<rect x="1102.0" y="680.0" width="6.0" height="7.0" fill="#e5dfb2" stroke="none" stroke-width="1" />
<rect x="1107.0" y="693.0" width="7.0" height="7.0" fill="#e5dfb2" stroke="none" stroke-width="1" />
<rect x="940.0" y="698.0" width="18.0" height="13.0" fill="#e5dfb2" stroke="none" stroke-width="1" />
<rect x="948.0" y="723.0" width="7.0" height="14.0" fill="#e5dfb2" stroke="none" stroke-width="1" />
<rect x="1005.0" y="728.0" width="15.0" height="12.0" fill="#e5dfb2" stroke="none" stroke-width="1" />
<rect x="1065.0" y="725.0" width="9.0" height="15.0" fill="#e5dfb2" stroke="none" stroke-width="1" />
<rect x="1089.0" y="721.0" width="8.0" height="9.0" fill="#e5dfb2" stroke="none" stroke-width="1" />
<rect x="1090.0" y="730.0" width="13.0" height="6.0" fill="#e5dfb2" stroke="none" stroke-width="1" />
<rect x="1113.0" y="723.0" width="7.0" height="10.0" fill="#e5dfb2" stroke="none" stroke-width="1" />
<rect x="1113.0" y="735.0" width="7.0" height="7.0" fill="#e5dfb2" stroke="none" stroke-width="1" />
<rect x="960.0" y="756.0" width="12.0" height="12.0" fill="#e5dfb2" stroke="none" stroke-width="1" />
<rect x="968.0" y="768.0" width="7.0" height="10.0" fill="#e5dfb2" stroke="none" stroke-width="1" />
<rect x="1002.0" y="759.0" width="14.0" height="13.0" fill="#e5dfb2" stroke="none" stroke-width="1" />
<rect x="1018.0" y="755.0" width="8.0" height="7.0" fill="#e5dfb2" stroke="none" stroke-width="1" />
<rect x="1043.0" y="753.0" width="17.0" height="7.0" fill="#e5dfb2" stroke="none" stroke-width="1" />
<rect x="1071.0" y="748.0" width="14.0" height="12.0" fill="#e5dfb2" stroke="none" stroke-width="1" />
<rect x="996.0" y="770.0" width="9.0" height="10.0" fill="#e5dfb2" stroke="none" stroke-width="1" />
<polygon points="650.0,-8.0 1288.0,-8.0 1288.0,796.0 1128.0,796.0 1146.0,430.0 1142.0,340.0 1144.0,164.0 771.2,268.5 747.5,254.4 752.5,243.0 678.8,263.8 624.0,253.0 629.0,200.0" fill="#78bb65" stroke="none" stroke-width="1" />
<polygon points="650.0,-8.0 684.0,-8.0 665.0,110.0 671.6,124.0 660.0,177.0 660.0,183.0 680.0,191.0 708.0,185.0 736.0,201.6 880.0,176.8 895.0,170.4 955.0,136.0 1045.0,123.5 1087.0,106.0 1065.0,142.5 760.0,231.0 752.5,243.0 678.8,263.8 638.8,251.2 625.0,250.0 629.0,200.0" fill="#acd7ad" stroke="none" stroke-width="1" />
<polygon points="575.0,242.5 623.8,253.8 625.0,250.0 638.8,251.2 678.8,263.8 617.5,281.2 618.8,277.5 608.8,271.2 605.0,265.0 573.8,255.6" fill="#a9d6a8" stroke="#6fb86a" stroke-width="0.8" />
<polyline points="650.0,0.0 629.0,200.0 623.8,253.8" fill="none" stroke="#4fae4a" stroke-width="1.6" />
<polyline points="575.0,242.5 623.8,253.8 678.8,263.8 752.5,243.0 1112.0,144.3" fill="none" stroke="#5cae55" stroke-width="1" />
<polyline points="925.0,0.0 902.6,201.0" fill="none" stroke="#4da542" stroke-width="1" />
<polygon points="656.0,225.0 693.7,209.8 705.0,236.7 668.0,253.0" fill="#6fc15b" stroke="none" stroke-width="1" />
<polygon points="747.5,254.4 752.5,243.0 1112.0,144.3 1112.0,174.0 771.2,268.5" fill="#a6cc85" stroke="none" stroke-width="1" />
<polygon points="1076.0,183.0 1144.0,164.0 1142.0,340.0 1139.0,340.0 1131.4,306.0 1141.0,262.4 1110.5,245.0 1102.9,209.0 1076.0,188.0" fill="#b2c083" stroke="none" stroke-width="1" />
<polyline points="722.0,281.0 1144.0,164.0 1142.0,340.0" fill="none" stroke="#d4a282" stroke-width="1" />
<polygon points="1127.0,430.0 1146.0,430.0 1128.7,796.0 1118.7,796.0" fill="#a8d5ab" stroke="none" stroke-width="1" />
<polygon points="1141.0,340.0 1146.0,340.0 1148.0,432.0 1140.0,432.0" fill="#a8d5ab" stroke="none" stroke-width="1" />
<polyline points="1175.0,101.5 1232.0,110.4 1236.0,150.0 1228.0,188.0 1177.0,262.0 1152.0,450.0 1135.0,788.0" fill="none" stroke="#6aaf5a" stroke-width="1" />
<polyline points="1232.0,110.4 1250.0,72.3 1273.0,64.0" fill="none" stroke="#6aaf5a" stroke-width="1" />
<polyline points="1217.0,73.6 1250.0,72.3" fill="none" stroke="#7fc07a" stroke-width="0.8" />
<polyline points="1167.0,335.0 1280.0,281.0" fill="none" stroke="#6aaf5a" stroke-width="0.8" />
<polyline points="1082.0,119.0 1175.0,101.5 1193.0,89.0" fill="none" stroke="#a2d39a" stroke-width="1.2" />
<polyline points="1228.0,433.0 1280.0,433.0" fill="none" stroke="#9fd0dc" stroke-width="2" />
<polyline points="1145.0,430.0 1135.0,788.0" fill="none" stroke="#6aaf5a" stroke-width="0.8" />
<polyline points="670.0,340.0 670.0,340.0" fill="none" stroke="none" stroke-width="0" />
<polyline points="655.0,218.0 740.0,218.0 878.0,180.0 960.0,150.0 1055.0,127.0" fill="none" stroke="#8cc48c" stroke-width="0.9" stroke-dasharray="1.5,3"/>
<polygon points="1052.6,342.4 1142.0,342.4 1141.0,430.8 1052.2,425.0" fill="#e2bedb" stroke="#9c2fae" stroke-width="2" />
<text x="1117" y="721.5" font-family="Liberation Sans" font-weight="bold" font-size="24.5" fill="#ffffff" fill-opacity="0.13">081</text>
<rect x="394.0" y="780.6" width="336.0" height="7.4" fill="#ffffff" stroke="none" stroke-width="1" />
<rect x="384.0" y="783.0" width="10.0" height="5.0" fill="#e9c88c" stroke="none" stroke-width="1" />
</svg>
</div>
<svg class="a" style="left:384px;top:0" width="40" height="40" viewBox="384 0 40 40"><defs><filter id="sh" x="-30%" y="-30%" width="160%" height="160%"><feDropShadow dx="0" dy="1" stdDeviation="1.2" flood-color="#000" flood-opacity="0.22"/></filter></defs><rect x="389" y="4" width="29" height="30" rx="3" fill="#ffffff" filter="url(#sh)"/><path d="M403.8 14.8 L399.6 19 L403.8 23.2 M408.3 14.8 L404.1 19 L408.3 23.2" fill="none" stroke="#2f86e0" stroke-width="1.9"/></svg>
</body></html>
